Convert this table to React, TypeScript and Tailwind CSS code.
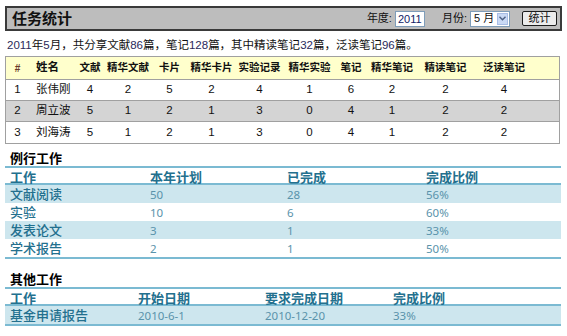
import React from 'react';

const cols = ['文献', '精华文献', '卡片', '精华卡片', '实验记录', '精华实验', '笔记', '精华笔记', '精读笔记', '泛读笔记'];

const people = [
  { id: 1, name: '张伟刚', nums: [4, 2, 5, 2, 4, 1, 6, 2, 2, 4] },
  { id: 2, name: '周立波', nums: [5, 1, 2, 1, 3, 0, 4, 1, 2, 2] },
  { id: 3, name: '刘海涛', nums: [5, 1, 2, 1, 3, 0, 4, 1, 2, 2] },
];

const routine = [
  ['文献阅读', '50', '28', '56%'],
  ['实验', '10', '6', '60%'],
  ['发表论文', '3', '1', '33%'],
  ['学术报告', '2', '1', '50%'],
];

const statGrid = 'grid grid-cols-[23px_44px_34px_42px_41px_43px_53px_47px_36px_46px_61px_56px_1fr]';

function Num({ children }: { children: React.ReactNode }) {
  return <span className="text-[#2a2a5a]">{children}</span>;
}

export default function App() {
  return (
    <div className="w-[567px] h-[336px] bg-white overflow-hidden px-[5px] pt-[6px] text-[#111]" style={{ fontFamily: '"Liberation Sans", "Noto Sans CJK SC", sans-serif' }}>
      {/* title bar */}
      <div className="h-[25px] bg-[#bdbdbd] border-2 border-[#3a3a3a] flex items-center justify-between pl-[5px] pr-[3px]">
        <span className="font-bold text-[15px] leading-none">任务统计</span>
        <div className="flex items-center text-[11px]">
          <span className="mr-[3px]">年度:</span>
          <div className="w-[30px] h-[16px] bg-white border border-[#7f9db9] text-[#112266] text-[11px] leading-[14px] pl-[2px]">2011</div>
          <span className="ml-[17px] mr-[3px]">月份:</span>
          <div className="w-[40px] h-[16px] bg-white border border-[#7f9db9] flex items-center justify-between pl-[3px] pr-[1px] text-[11px]">
            <span>5 月</span>
            <span className="w-[11px] h-[12px] bg-[#c9d9f5] border border-[#a8bde6] flex items-center justify-center">
              <svg width="7" height="5" viewBox="0 0 7 5"><path d="M0.5 0.8 L3.5 3.8 L6.5 0.8" fill="none" stroke="#4d6185" strokeWidth="1.4" /></svg>
            </span>
          </div>
          <button className="ml-[12px] w-[35px] h-[15px] bg-[#ececec] border border-[#1c1c1c] rounded-[2px] text-[11px] leading-none flex items-center justify-center">统计</button>
        </div>
      </div>

      {/* summary */}
      <div className="text-[11.5px] mt-[7px] pl-[2px] h-[14px] leading-[14px]">
        <Num>2011</Num>年<Num>5</Num>月，共分享文献<Num>86</Num>篇，笔记<Num>128</Num>篇，其中精读笔记<Num>32</Num>篇，泛读笔记<Num>96</Num>篇。
      </div>

      {/* stats table */}
      <div className="mt-[4px] border border-[#a0a0a0] mr-[2px] text-[11.5px]">
        <div className={`${statGrid} h-[23px] bg-[#ffffcc] items-center font-bold border-b border-[#a0a0a0] whitespace-nowrap text-[10.5px]`}>
          <span className="text-center text-[10px] text-[#6a3a2a]">#</span>
          <span className="pl-[7px] text-[11.5px]">姓名</span>
          {cols.map((c) => (
            <span key={c} className="flex justify-center">{c}</span>
          ))}
          <span />
        </div>
        {people.map((p, i) => (
          <div key={p.id} className={`${statGrid} h-[21px] items-center ${i === 1 ? 'bg-[#d4d4d4]' : 'bg-white'} ${i < 2 ? 'border-b border-[#a0a0a0]' : ''}`}>
            <span className="text-center">{p.id}</span>
            <span className="pl-[7px]">{p.name}</span>
            {p.nums.map((n, j) => (
              <span key={j} className="text-center">{n}</span>
            ))}
            <span />
          </div>
        ))}
      </div>

      {/* routine work */}
      <div className="mt-[6px] font-bold text-[13px] leading-[16px] pl-[5px] text-black" style={{ fontFamily: '"Noto Sans CJK SC", sans-serif' }}>例行工作</div>
      <div className="border-t-2 border-b-2 border-[#7bbad2] mr-[1px]" style={{ fontFamily: '"Noto Sans", "Noto Sans CJK SC", sans-serif' }}>
        <div className="grid grid-cols-[140px_137px_139px_1fr] h-[17px] items-center border-b-2 border-[#7bbad2] text-[13px] font-semibold text-[#23708e]">
          {['工作', '本年计划', '已完成', '完成比例'].map((h) => (
            <span key={h} className="pl-[5px]">{h}</span>
          ))}
        </div>
        {routine.map((r, i) => (
          <div key={r[0]} className={`grid grid-cols-[140px_137px_139px_1fr] h-[18px] items-center ${i % 2 === 0 ? 'bg-[#cde6ee]' : 'bg-white'}`}>
            <span className="pl-[5px] text-[13px] font-medium text-[#23708e]">{r[0]}</span>
            <span className="pl-[5px] text-[11.5px] text-[#5a93ab]">{r[1]}</span>
            <span className="pl-[5px] text-[11.5px] text-[#5a93ab]">{r[2]}</span>
            <span className="pl-[5px] text-[11.5px] text-[#5a93ab]">{r[3]}</span>
          </div>
        ))}
      </div>

      {/* other work */}
      <div className="mt-[12px] font-bold text-[13px] leading-[16px] pl-[5px] text-black" style={{ fontFamily: '"Noto Sans CJK SC", sans-serif' }}>其他工作</div>
      <div className="border-t-2 border-b-2 border-[#7bbad2] mr-[1px]" style={{ fontFamily: '"Noto Sans", "Noto Sans CJK SC", sans-serif' }}>
        <div className="grid grid-cols-[128px_127px_128px_1fr] h-[17px] items-center border-b-2 border-[#7bbad2] text-[13px] font-semibold text-[#23708e]">
          {['工作', '开始日期', '要求完成日期', '完成比例'].map((h) => (
            <span key={h} className="pl-[5px]">{h}</span>
          ))}
        </div>
        <div className="grid grid-cols-[128px_127px_128px_1fr] h-[18px] items-center bg-[#cde6ee]">
          <span className="pl-[5px] text-[13px] font-medium text-[#23708e]">基金申请报告</span>
          <span className="pl-[5px] text-[11.5px] text-[#5a93ab]">2010-6-1</span>
          <span className="pl-[5px] text-[11.5px] text-[#5a93ab]">2010-12-20</span>
          <span className="pl-[5px] text-[11.5px] text-[#5a93ab]">33%</span>
        </div>
      </div>
    </div>
  );
}
